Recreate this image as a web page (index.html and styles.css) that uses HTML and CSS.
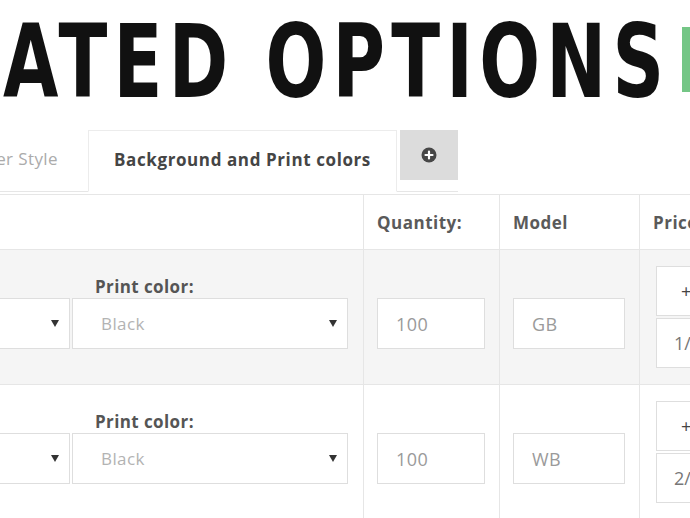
FILE: index.html
```html
<!DOCTYPE html>
<html lang="en">
<head>
  <meta charset="UTF-8">
  <meta name="viewport" content="width=device-width, initial-scale=1.0">
  <title>Related Options</title>
  <link rel="stylesheet" href="styles.css">
</head>
<body>
  <div class="page">
    <!-- Heading -->
    <header class="page-head">
      <h1 class="title">RELATED OPTIONS</h1>
      <span class="badge"></span>
    </header>

    <!-- Option tabs -->
    <div class="tabs">
      <div class="tab">Border Style</div>
      <div class="tab active">Background and Print colors</div>
      <button class="tab-add" type="button" aria-label="Add tab">
        <svg width="16" height="16" viewBox="0 0 16 16">
          <circle cx="8" cy="8" r="7.5" fill="#474747"/>
          <path d="M8 4.5v7M4.5 8h7" stroke="#fff" stroke-width="2.2" stroke-linecap="round"/>
        </svg>
      </button>
    </div>

    <!-- Combinations table -->
    <table class="options">
      <thead>
        <tr>
          <th class="col-colors"></th>
          <th class="col-qty">Quantity:</th>
          <th class="col-model">Model</th>
          <th class="col-price">Price</th>
        </tr>
      </thead>
      <tbody>
        <tr class="row-alt">
          <td>
            <div class="colors">
              <div class="field">
                <label>Background color:</label>
                <div class="select"><span>Green</span><i class="caret"></i></div>
              </div>
              <div class="field">
                <label>Print color:</label>
                <div class="select"><span>Black</span><i class="caret"></i></div>
              </div>
            </div>
          </td>
          <td><input class="text-input" type="text" value="100"></td>
          <td><input class="text-input" type="text" value="GB"></td>
          <td>
            <div class="price">
              <div class="price-box sign">+</div>
              <div class="price-box">1/4</div>
            </div>
          </td>
        </tr>
        <tr>
          <td>
            <div class="colors">
              <div class="field">
                <label>Background color:</label>
                <div class="select"><span>White</span><i class="caret"></i></div>
              </div>
              <div class="field">
                <label>Print color:</label>
                <div class="select"><span>Black</span><i class="caret"></i></div>
              </div>
            </div>
          </td>
          <td><input class="text-input" type="text" value="100"></td>
          <td><input class="text-input" type="text" value="WB"></td>
          <td>
            <div class="price">
              <div class="price-box sign">+</div>
              <div class="price-box">2/4</div>
            </div>
          </td>
        </tr>
      </tbody>
    </table>
  </div>
</body>
</html>
```

FILE: styles.css
```css
/* Basic reset */
* {
  margin: 0;
  padding: 0;
  box-sizing: border-box;
}

body {
  font-family: 'Open Sans', 'Liberation Sans', sans-serif;
  background: #fff;
  color: #555;
  overflow: hidden;
}

/* The page is wider than the window, we see its middle part */
.page {
  margin-left: -240px;
  width: 1260px;
}

/* Heading */
.page-head {
  display: flex;
  justify-content: flex-end;
  align-items: flex-start;
  gap: 12px;
  width: 962px;
  height: 130px;
}

.title {
  flex-shrink: 0;
  margin-top: 11px;
  font-family: 'DejaVu Sans Condensed', 'DejaVu Sans', sans-serif;
  font-size: 102px;
  font-weight: 700;
  line-height: 1;
  letter-spacing: 8px;
  color: #111;
  white-space: nowrap;
  transform: scaleX(0.78);
  transform-origin: right center;
}

.badge {
  flex-shrink: 0;
  margin-top: 27px;
  width: 40px;
  height: 65px;
  background: #74c686;
}

/* Tabs */
.tabs {
  display: flex;
  justify-content: flex-end;
  align-items: flex-start;
  gap: 3px;
  width: 698px;
  height: 62px;
  border-bottom: 1px solid #e6e6e6;
}

.tab {
  height: 62px;
  padding: 0 27px 0 24px;
  line-height: 58px;
  font-size: 17px;
  letter-spacing: 0.4px;
  color: #ababab;
  white-space: nowrap;
}

.tab.active {
  width: 309px;
  padding: 0;
  text-align: center;
  font-weight: 700;
  letter-spacing: 0.6px;
  color: #454545;
  background: #fff;
  border: 1px solid #ececec;
  border-bottom-color: #fff;
  margin-bottom: -1px;
}

.tab-add {
  width: 58px;
  height: 50px;
  border: none;
  background: #dcdcdc;
  display: flex;
  justify-content: center;
  align-items: center;
  cursor: pointer;
}

/* Table */
.options {
  margin-top: 2px;
  border-collapse: collapse;
  table-layout: fixed;
  width: 1019px;
}

.options th,
.options td {
  border: 1px solid #e6e6e6;
  text-align: left;
}

.options th {
  height: 55px;
  padding: 0 13px;
  font-size: 17px;
  font-weight: 700;
  letter-spacing: 0.5px;
  color: #5a5a5a;
  vertical-align: middle;
  white-space: nowrap;
  overflow: hidden;
}

.col-colors { width: 603px; }
.col-qty { width: 136px; }
.col-model { width: 140px; }
.col-price { width: 140px; }

.options td {
  height: 135px;
  padding: 27px 14px 0 13px;
  vertical-align: top;
}

.options tr.row-alt td {
  background: #f5f5f5;
}

.options td:first-child {
  padding-right: 15px;
}

.colors {
  display: flex;
  justify-content: flex-end;
  gap: 2px;
}

.field {
  width: 276px;
}

.field label {
  display: block;
  height: 20px;
  margin-bottom: 1px;
  padding-left: 23px;
  font-size: 17px;
  font-weight: 700;
  letter-spacing: 0.4px;
  line-height: 20px;
  color: #555;
  white-space: nowrap;
}

/* Select look-alike */
.select {
  display: flex;
  justify-content: space-between;
  align-items: center;
  height: 51px;
  padding: 0 10px 0 28px;
  background: #fff;
  border: 1px solid #dedede;
  font-size: 17px;
  letter-spacing: 0.4px;
  color: #b3b3b3;
}

.caret {
  width: 0;
  height: 0;
  border-left: 4px solid transparent;
  border-right: 4px solid transparent;
  border-top: 7px solid #333;
}

.text-input {
  display: block;
  width: 100%;
  height: 51px;
  margin-top: 21px;
  padding: 0 18px;
  font-family: inherit;
  font-size: 18px;
  letter-spacing: 0.5px;
  color: #9a9a9a;
  background: #fff;
  border: 1px solid #dedede;
  outline: none;
}

/* Price column */
.options td:last-child {
  padding: 16px 0 0 16px;
}

.price {
  display: flex;
  flex-direction: column;
  gap: 2px;
}

.price-box {
  height: 50px;
  padding-left: 17px;
  line-height: 48px;
  font-size: 18px;
  color: #777;
  background: #fff;
  border: 1px solid #dedede;
}

.price-box.sign {
  padding-left: 24px;
  color: #444;
}
```
